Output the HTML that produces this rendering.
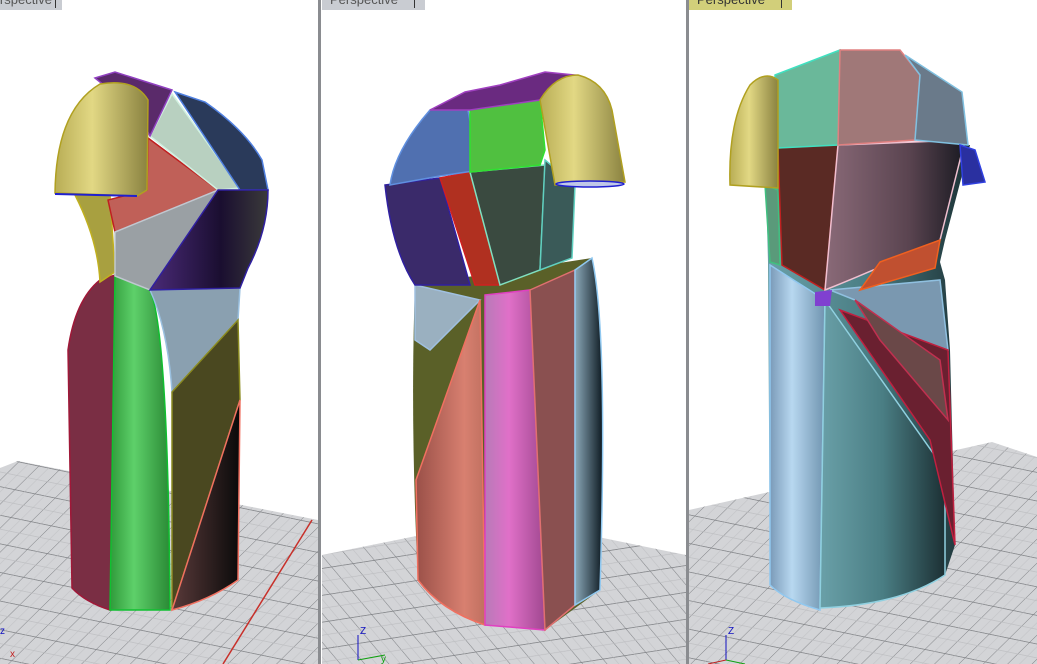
<!DOCTYPE html>
<html><head><meta charset="utf-8"><style>
html,body{margin:0;padding:0;background:#fff;width:1037px;height:664px;overflow:hidden}
svg{display:block}
text{font-family:"Liberation Sans",sans-serif}
</style></head><body>
<svg width="1037" height="664" viewBox="0 0 1037 664" xmlns="http://www.w3.org/2000/svg">
<defs>
<pattern id="g1" width="24" height="24" patternUnits="userSpaceOnUse" patternTransform="skewX(-40) rotate(10)">
<rect width="24" height="24" fill="#d3d4d7"/><path d="M0 0H24M0 0V24" stroke="#7e8084" stroke-width="1.3"/>
<path d="M0 12H24M12 0V24" stroke="#bcbdc0" stroke-width="0.6"/></pattern>
<pattern id="g2" width="24" height="24" patternUnits="userSpaceOnUse" patternTransform="skewX(35) rotate(-8)">
<rect width="24" height="24" fill="#d3d4d7"/><path d="M0 0H24M0 0V24" stroke="#7e8084" stroke-width="1.3"/>
<path d="M0 12H24M12 0V24" stroke="#bcbdc0" stroke-width="0.6"/></pattern>
<linearGradient id="yel" x1="0" x2="1"><stop offset="0" stop-color="#b8ad55"/><stop offset=".4" stop-color="#e2d884"/><stop offset="1" stop-color="#8a8240"/></linearGradient>
<linearGradient id="grn" x1="0" x2="1"><stop offset="0" stop-color="#2f9a3a"/><stop offset=".4" stop-color="#5ed06a"/><stop offset="1" stop-color="#2a8a35"/></linearGradient>
<linearGradient id="dk" x1="0" x2="1"><stop offset="0" stop-color="#5a3a3a"/><stop offset="1" stop-color="#0a0a0a"/></linearGradient>
<linearGradient id="pur" x1="0" x2="1"><stop offset="0" stop-color="#4a2a78"/><stop offset=".6" stop-color="#1a0e30"/><stop offset="1" stop-color="#3a3a3a"/></linearGradient>
<linearGradient id="pink" x1="0" x2="1"><stop offset="0" stop-color="#b87ab8"/><stop offset=".4" stop-color="#e070c8"/><stop offset="1" stop-color="#a04890"/></linearGradient>
<linearGradient id="sal" x1="0" x2="1"><stop offset="0" stop-color="#9a5048"/><stop offset=".7" stop-color="#d88070"/><stop offset="1" stop-color="#c07060"/></linearGradient>
<linearGradient id="teal" x1="0" x2="1"><stop offset="0" stop-color="#6aa0a8"/><stop offset=".5" stop-color="#4a7e84"/><stop offset="1" stop-color="#1c3034"/></linearGradient>
<linearGradient id="lb" x1="0" x2="1"><stop offset="0" stop-color="#7a9ab8"/><stop offset=".4" stop-color="#b8d8f0"/><stop offset="1" stop-color="#7094b0"/></linearGradient>
<linearGradient id="slate" x1="0" x2="1"><stop offset="0" stop-color="#8aa8b8"/><stop offset="1" stop-color="#0e1a22"/></linearGradient>
<linearGradient id="mauve" x1="0" x2="1"><stop offset="0" stop-color="#8a6a78"/><stop offset=".6" stop-color="#5a4450"/><stop offset="1" stop-color="#1a1a22"/></linearGradient>
</defs>

<polygon points="0,468 18,461 318,520 318,664 0,664" fill="url(#g1)"/>
<line x1="312" y1="520" x2="223" y2="664" stroke="#c8302a" stroke-width="1.5"/>
<polygon points="322,555 505,518 686,555 686,664 322,664" fill="url(#g2)"/>
<polygon points="689,510 992,442 1037,457 1037,664 689,664" fill="url(#g1)"/>

<rect x="318" y="0" width="3" height="664" fill="#8a8c90"/>
<rect x="686" y="0" width="3" height="664" fill="#8a8c90"/>

<rect x="0" y="0" width="62" height="10" fill="#c9ccd2"/>
<text x="-16" y="4" font-size="13" fill="#555">Perspective</text><rect x="55" y="0" width="1" height="8" fill="#333"/>
<rect x="322" y="0" width="103" height="10" fill="#c9ccd2"/>
<text x="330" y="4" font-size="13" fill="#555">Perspective</text><rect x="414" y="0" width="1" height="8" fill="#333"/>
<rect x="689" y="0" width="103" height="10" fill="#d2cf7a"/>
<text x="697" y="4" font-size="13" fill="#333">Perspective</text><rect x="781" y="0" width="1" height="8" fill="#333"/>

<!-- ===== dress 1 ===== -->
<g stroke-width="1.5">
<path d="M100,280 L115,275 L110,610 Q85,602 72,588 L68,350 Q75,300 100,280Z" fill="#7a2e44" stroke="#a01838"/>
<path d="M115,275 L150,290 Q168,330 170,610 L110,610Z" fill="url(#grn)" stroke="#10c030"/>
<path d="M150,290 L240,288 L238,320 L172,392 Q168,330 150,290Z" fill="#8aa0b0" stroke="#9ac0e0"/>
<path d="M172,392 L238,320 L240,400 L172,610Z" fill="#4a4820" stroke="#8a8a20"/>
<path d="M240,400 L238,580 Q210,600 172,610Z" fill="url(#dk)" stroke="#f07060"/>
<path d="M75,195 L110,195 L115,272 L100,282 Q98,240 75,195Z" fill="#a8a040" stroke="#c0b020"/>
<path d="M148,138 L218,190 L115,232 L108,200 L147,190Z" fill="#c06058" stroke="#c02020"/>
<path d="M172,94 L240,188 L218,190 L150,136 Z" fill="#b8d0c0" stroke="#d0f0e0"/>
<path d="M175,92 L205,102 Q245,130 262,160 L268,190 L240,190Z" fill="#2a3a5a" stroke="#5080e0"/>
<path d="M115,232 L218,190 L150,290 L115,276Z" fill="#9aa0a4" stroke="#c0c8d0"/>
<path d="M218,190 L268,190 Q268,230 248,268 L240,288 L150,290Z" fill="url(#pur)" stroke="#3020a0"/>
<path d="M95,78 L115,72 L172,90 L150,136 L135,110Z" fill="#5a2a6a" stroke="#9040c0"/>
<path d="M55,193 Q56,110 100,84 Q135,78 148,100 L147,190 L137,196Z" fill="url(#yel)" stroke="#b0a020"/>
<line x1="55" y1="194" x2="137" y2="196" stroke="#2020d0" stroke-width="2"/>
</g>

<!-- ===== dress 2 ===== -->
<g stroke-width="1.5">
<path d="M415,285 L592,258 Q608,330 600,590 L545,630 L485,625 Q440,610 418,580 Q410,420 415,285Z" fill="#5a6028"/>
<path d="M415,285 L480,300 L430,350 L415,340Z" fill="#9ab0c0" stroke="#a0c0e0"/>
<path d="M480,300 L485,625 Q440,610 418,580 L416,480Z" fill="url(#sal)" stroke="#f07060"/>
<path d="M485,295 L530,290 L545,630 L485,625Z" fill="url(#pink)" stroke="#e040c0"/>
<path d="M530,290 L575,270 L575,605 L545,630Z" fill="#8a5050" stroke="#e07070"/>
<path d="M575,270 L592,258 Q608,330 600,590 L575,605Z" fill="url(#slate)" stroke="#90c8f0"/>
<path d="M385,185 L440,178 L470,285 L415,285 Q392,250 385,185Z" fill="#3a2a6a" stroke="#3020a0"/>
<path d="M440,178 L470,172 L500,285 L475,285Z" fill="#b03020" stroke="#d02020"/>
<path d="M470,172 L545,165 L540,270 L500,285Z" fill="#3a4a40" stroke="#80e0c0"/>
<path d="M545,160 L575,185 L572,258 L540,270Z" fill="#3a5a58" stroke="#60d0c0"/>
<path d="M390,185 Q395,150 430,110 L465,96 L480,170 L440,176Z" fill="#5070b0" stroke="#6090e0"/>
<path d="M470,110 L540,100 L545,150 L540,165 L470,172Z" fill="#50c040" stroke="#30e030"/>
<path d="M430,110 L465,92 L500,85 L545,72 L575,75 L540,100 L470,110Z" fill="#6a2a80" stroke="#a040c0"/>
<path d="M540,100 Q555,75 578,75 Q605,82 612,110 L625,182 L555,185Z" fill="url(#yel)" stroke="#b0a020"/>
<ellipse cx="590" cy="184" rx="34" ry="3" fill="#c0c8e8" stroke="#2020d0"/>
</g>

<!-- ===== dress 3 ===== -->
<g stroke-width="1.5">
<path d="M765,150 L970,145 L945,240 L940,262 L945,280 L950,350 L955,545 L945,575 Q900,605 820,608 Q785,600 770,585 L768,262Z" fill="url(#teal)"/>
<path d="M770,265 L825,300 L820,610 Q785,600 770,585Z" fill="url(#lb)" stroke="#90c8f0"/>
<path d="M825,300 L945,470 L945,575 Q900,605 820,608Z" fill="url(#teal)" stroke="#90d0e0"/>
<path d="M830,290 L940,280 L948,350 L900,340 L855,300Z" fill="#7a98b0" stroke="#90c0e0"/>
<path d="M840,310 L948,350 L955,545 L930,440 Z" fill="#6a2030" stroke="#c02040"/>
<path d="M855,300 L940,360 L948,420 L880,340Z" fill="#6a4848" stroke="#c03050"/>
<path d="M765,185 L778,190 L780,265 L770,262Z" fill="#5a9a7a" stroke="#40c080"/>
<path d="M778,148 L838,145 L825,290 L782,265Z" fill="#5a2a24" stroke="#c02020"/>
<path d="M838,145 L965,140 L940,240 Q880,268 825,290Z" fill="url(#mauve)" stroke="#f0c0d0"/>
<path d="M880,262 L940,240 L935,268 L860,290Z" fill="#c05030" stroke="#f06020"/>
<path d="M775,75 L840,50 L838,145 L778,148Z" fill="#6ab89a" stroke="#40e0c0"/>
<path d="M840,50 L900,50 L920,75 L915,140 L838,145Z" fill="#a07878" stroke="#e08080"/>
<path d="M905,55 L962,92 L968,145 L915,140 L920,75Z" fill="#6a7a8a" stroke="#80c0e0"/>
<path d="M960,145 L975,150 L985,182 L963,185Z" fill="#2a30a0" stroke="#3040e0"/>
<path d="M815,292 L832,290 L830,306 L815,306Z" fill="#8040d0"/>
<path d="M730,185 Q728,120 750,85 Q765,70 778,80 L778,188Z" fill="url(#yel)" stroke="#b0a020"/>
</g>

<g font-size="10" font-family="Liberation Sans">
<text x="0" y="634" fill="#1010c0">z</text>
<text x="10" y="657" fill="#c02020">x</text>
<line x1="358" y1="635" x2="358" y2="660" stroke="#1010c0"/><text x="360" y="634" fill="#1010c0">Z</text>
<line x1="358" y1="660" x2="385" y2="655" stroke="#10a010"/><text x="381" y="662" fill="#10a010">y</text>
<line x1="726" y1="635" x2="726" y2="660" stroke="#1010c0"/><text x="728" y="634" fill="#1010c0">Z</text>
<line x1="726" y1="660" x2="708" y2="664" stroke="#c02020"/>
<line x1="726" y1="660" x2="745" y2="664" stroke="#10a010"/>
</g>
</svg>
</body></html>
